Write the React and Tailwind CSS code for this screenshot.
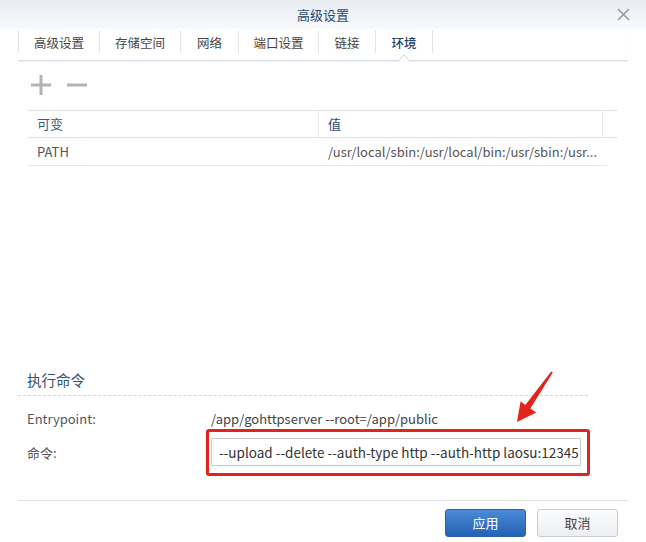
import { useState } from "react";

const tabs = [
  { label: "高级设置", w: "w-[81px]" },
  { label: "存储空间", w: "w-[81px]" },
  { label: "网络", w: "w-[58px]" },
  { label: "端口设置", w: "w-[80px]" },
  { label: "链接", w: "w-[57px]" },
  { label: "环境", w: "w-[57px]" },
];

export default function App() {
  const [active] = useState("环境");

  return (
    <div className="relative w-[646px] h-[542px] overflow-hidden bg-white font-['Noto_Sans_CJK_SC',sans-serif] text-[13px] text-[#4a4a4a]">
      {/* 标题栏 */}
      <div className="relative flex h-[29px] items-center justify-center bg-gradient-to-b from-[#e9edf2] to-[#f8f9fb]">
        <span className="text-[13px] text-[#1f4670]">高级设置</span>
        <svg className="absolute right-[16px] top-[8px]" width="13" height="13" viewBox="0 0 13 13">
          <path d="M1 1L12 12M12 1L1 12" stroke="#9a9a9a" strokeWidth="1.6" />
        </svg>
      </div>

      {/* 标签页 */}
      <div className="mx-[18px] flex h-[32px] items-stretch border-b border-[#dcdfe3] shadow-[0_1px_1px_rgba(0,0,0,0.06)]">
        {tabs.map((t) => (
          <div
            key={t.label}
            className={`relative flex ${t.w} items-start justify-center border-l border-[#e2e4e7] pt-[4px] mt-[1px] mb-[7px] text-[12.5px] ${
              active === t.label ? "text-[#1f4670] font-medium" : "text-[#444]"
            }`}
          >
            {t.label}
            {active === t.label && (
              <span className="absolute left-1/2 bottom-[-11px] h-[8px] w-[8px] -translate-x-1/2 rotate-45 border-l border-t border-[#dcdfe3] bg-white" />
            )}
          </div>
        ))}
        <div className="w-0 border-l border-[#e2e4e7] mt-[1px] mb-[7px]" />
      </div>

      {/* 加减按钮 */}
      <div className="ml-[31px] mt-[14px] flex items-center gap-[16px]">
        <svg width="20" height="20" viewBox="0 0 20 20">
          <path d="M10 0V20M0 10H20" stroke="#b3b3b3" strokeWidth="3" />
        </svg>
        <svg width="20" height="20" viewBox="0 0 20 20">
          <path d="M0 10H20" stroke="#b3b3b3" strokeWidth="3" />
        </svg>
      </div>

      {/* 环境变量表格 */}
      <div className="ml-[28px] mt-[15px] w-[590px]">
        <div className="flex h-[28px] items-center border-t border-b border-[#dfe5ec]">
          <div className="flex h-full w-[290px] items-center pl-[9px] text-[#3e5a78]">可变</div>
          <div className="flex h-full w-[284px] items-center border-l border-[#e3e8ee] pl-[9px] text-[#2c4a6c]">值</div>
          <div className="h-full flex-1 border-l border-[#e3e8ee]" />
        </div>
        <div className="flex h-[28px] w-[579px] items-center border-b border-[#e3e8ee]">
          <div className="w-[290px] pl-[9px] text-[#555]">PATH</div>
          <div className="w-[284px] truncate pl-[10px] text-[#555]">/usr/local/sbin:/usr/local/bin:/usr/sbin:/usr...</div>
        </div>
      </div>

      {/* 执行命令 */}
      <div className="mx-[18px] mt-[203px]">
        <div className="w-[570px] border-b border-dashed border-[#d2d6da] pb-[4px] pl-[9px] text-[14.5px] text-[#34526f]">执行命令</div>
        <div className="mt-[13px] flex h-[20px] items-center pl-[9px]">
          <span className="w-[184px] text-[#555]">Entrypoint:</span>
          <span className="text-[#444]">/app/gohttpserver --root=/app/public</span>
        </div>
        <div className="flex items-center pl-[9px]">
          <span className="w-[179px] text-[#555]">命令:</span>
          <div className="rounded-[3px] border-[3px] border-[#e5231d] pl-[2px] pr-[6px] pt-[6px] pb-[7px]">
            <div className="flex h-[28px] w-[370px] items-center border border-[#c9ccd0] bg-white pl-[7px] text-[13.5px] text-[#333]">
              --upload --delete --auth-type http --auth-http laosu:12345
            </div>
          </div>
        </div>
      </div>

      {/* 底部按钮 */}
      <div className="mx-[18px] mt-[24px] flex justify-end gap-[11px] border-t border-[#dfe2e6] pt-[8px] pr-[10px]">
        <button className="h-[28px] w-[81px] rounded-[3px] border border-[#2b63a8] bg-gradient-to-b from-[#4a8ad6] to-[#2463b4] text-white">
          应用
        </button>
        <button className="h-[28px] w-[81px] rounded-[3px] border border-[#c9cdd2] bg-gradient-to-b from-[#fbfcfd] to-[#eceff2] text-[#444]">
          取消
        </button>
      </div>

      {/* 红色箭头标注 */}
      <svg className="absolute left-[500px] top-[360px]" width="60" height="66" viewBox="0 0 60 66">
        <polygon
          points="51.2,11.4 52.8,12.6 30.3,48.4 36.2,52.6 17,62 20.6,41.2 25.3,44.9"
          fill="#e5231d"
        />
      </svg>
    </div>
  );
}
